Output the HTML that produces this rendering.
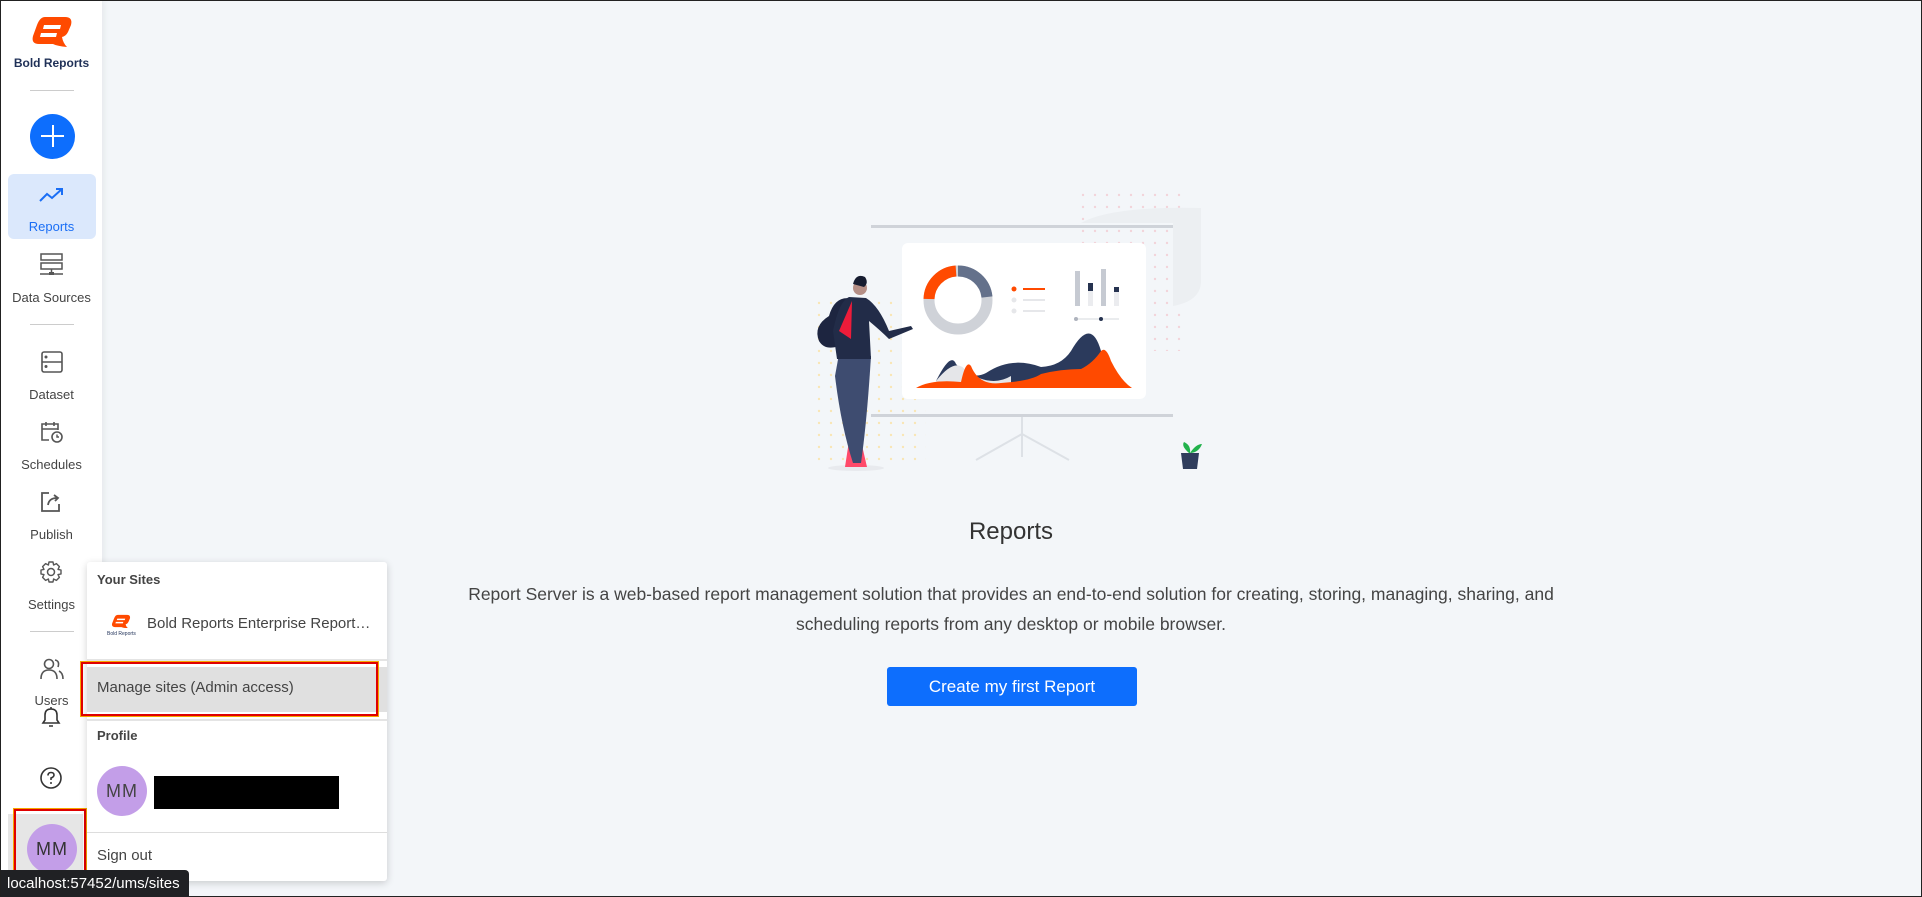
<!DOCTYPE html>
<html><head><meta charset="utf-8"><style>
*{box-sizing:border-box;margin:0;padding:0}
html,body{width:1922px;height:897px;overflow:hidden}
body{font-family:"Liberation Sans",Arial,sans-serif;background:#f3f6f9;position:relative;border:1px solid #222}
.sb{position:absolute;left:0;top:0;width:101px;height:897px;background:#fff;box-shadow:2px 0 6px rgba(0,0,0,.06)}
.lbl{position:absolute;left:0;width:101px;text-align:center;font-size:13px;color:#444}
.ic{position:absolute;left:38px}
.div{position:absolute;left:29px;width:44px;height:1px;background:#ccc}
.dd{position:absolute;left:86px;top:561px;width:300px;height:319px;background:#fff;box-shadow:0 2px 8px rgba(0,0,0,.18);border-radius:3px}
.sep{position:absolute;left:0;width:300px;height:2px;background:#e4e4e4}
</style></head><body>
<div class="sb">
<svg style="position:absolute;left:30px;top:14px" width="42" height="34" viewBox="0 0 42 34"><path d="M14 2 H34 Q42 2 40 10 L37 17 Q35 21 31 22 Q32 28 36 32 Q26 31 22 29 H8 Q0 29 2 21 L6 10 Q9 2 14 2 Z" fill="#ff4a00"/><path d="M13 10 H30 L29 14 H12 Z M10 18 H26 L25 22 H9 Z" fill="#fff"/></svg>
<div class="lbl" style="top:55px;font-size:12px;font-weight:bold;color:#1f3057">Bold Reports</div>
<div class="div" style="top:89px"></div>
<div style="position:absolute;left:29px;top:113px;width:45px;height:45px;border-radius:50%;background:#0d6efd"></div>
<div style="position:absolute;left:40px;top:134px;width:23px;height:2px;background:#fff"></div>
<div style="position:absolute;left:50.5px;top:124px;width:2px;height:22px;background:#fff"></div>
<div style="position:absolute;left:7px;top:173px;width:88px;height:65px;background:#dbe8fc;border-radius:6px"></div>
<svg class="ic" style="top:186px" width="26" height="16" viewBox="0 0 26 16"><path d="M1 14 L8 7 L13 11 L23 2 M17 2 H23 V8" stroke="#1a6ef5" stroke-width="2" fill="none"/></svg>
<div class="lbl" style="top:218px;color:#1a6ef5">Reports</div>
<svg class="ic" style="top:252px" width="26" height="24" viewBox="0 0 26 24"><rect x="2" y="1" width="21" height="6" fill="none" stroke="#555" stroke-width="1.5"/><rect x="2" y="10" width="21" height="6" fill="none" stroke="#555" stroke-width="1.5"/><path d="M12.5 16 V20 M1 21 H24" stroke="#555" stroke-width="1.5"/><rect x="10" y="19" width="5" height="3" fill="#555"/></svg>
<div class="lbl" style="top:289px">Data Sources</div>
<div class="div" style="top:323px"></div>
<svg class="ic" style="top:349px" width="24" height="24" viewBox="0 0 24 24"><rect x="3" y="2" width="20" height="20" rx="2" fill="none" stroke="#555" stroke-width="1.6"/><path d="M3 12 H23" stroke="#555" stroke-width="1.6"/><circle cx="7" cy="7" r="1.5" fill="#555"/><circle cx="7" cy="16.5" r="1.5" fill="#555"/></svg>
<div class="lbl" style="top:386px">Dataset</div>
<svg class="ic" style="top:419px" width="26" height="24" viewBox="0 0 26 24"><path d="M10 20 H3 V4 H19 V10 M3 9 H19 M7 2 V6 M15 2 V6" stroke="#555" stroke-width="1.6" fill="none"/><circle cx="18" cy="17" r="5" fill="none" stroke="#555" stroke-width="1.6"/><path d="M18 14.5 V17 H20" stroke="#555" stroke-width="1.4" fill="none"/></svg>
<div class="lbl" style="top:456px">Schedules</div>
<svg class="ic" style="top:489px" width="24" height="24" viewBox="0 0 24 24"><path d="M10 3 H3 V21 H20 V14" stroke="#555" stroke-width="1.8" fill="none"/><path d="M9 15 Q10 8 18 8 M15 5 L19 8 L16 11" stroke="#555" stroke-width="1.8" fill="none"/></svg>
<div class="lbl" style="top:526px">Publish</div>
<svg class="ic" style="top:559px" width="24" height="24" viewBox="0 0 24 24"><circle cx="12" cy="12" r="3.5" fill="none" stroke="#555" stroke-width="1.5"/><path d="M10 2 H14 L14.6 5 L17.4 3.6 L20.4 6.6 L19 9.4 L22 10 V14 L19 14.6 L20.4 17.4 L17.4 20.4 L14.6 19 L14 22 H10 L9.4 19 L6.6 20.4 L3.6 17.4 L5 14.6 L2 14 V10 L5 9.4 L3.6 6.6 L6.6 3.6 L9.4 5 Z" fill="none" stroke="#555" stroke-width="1.4" stroke-linejoin="round"/></svg>
<div class="lbl" style="top:596px">Settings</div>
<div class="div" style="top:630px"></div>
<svg class="ic" style="top:656px" width="26" height="24" viewBox="0 0 26 24"><circle cx="10" cy="7" r="4.5" fill="none" stroke="#555" stroke-width="1.6"/><path d="M2 22 Q2 13 10 13 Q18 13 18 22" fill="none" stroke="#555" stroke-width="1.6"/><path d="M16 3 Q21 4 19 10 M20 14 Q24 16 24 22" fill="none" stroke="#555" stroke-width="1.6"/></svg>
<div class="lbl" style="top:692px">Users</div>
<svg class="ic" style="top:704px" width="24" height="24" viewBox="0 0 24 24"><path d="M4 18 H20 L18 15 V10 Q18 4 12 4 Q6 4 6 10 V15 Z M12 2 V4 M10 21 H14" fill="none" stroke="#333" stroke-width="1.6"/></svg>
<svg class="ic" style="top:765px" width="24" height="24" viewBox="0 0 24 24"><circle cx="12" cy="12" r="10" fill="none" stroke="#333" stroke-width="1.6"/><path d="M9 9.5 Q9 6.5 12 6.5 Q15 6.5 15 9 Q15 11 12 12 V14" fill="none" stroke="#333" stroke-width="1.6"/><circle cx="12" cy="17" r="1" fill="#333"/></svg>
<div style="position:absolute;left:7px;top:813px;width:75px;height:70px;background:#e6e6e6"></div>
<div style="position:absolute;left:26px;top:823px;width:50px;height:50px;border-radius:50%;background:#c39ee8;color:#333;font-size:18px;text-align:center;line-height:50px;letter-spacing:1px">MM</div>
<div style="position:absolute;left:13px;top:808px;width:72px;height:74px;border:2px solid #e00000;outline:1px solid #f5a500"></div>
</div>
<div class="dd">
<div style="position:absolute;left:10px;top:10px;font-size:13px;font-weight:bold;color:#444">Your Sites</div>
<svg style="position:absolute;left:24px;top:52px" width="20" height="14" viewBox="0 0 42 30"><path d="M14 2 H34 Q42 2 40 10 L37 17 Q35 21 31 22 Q32 28 36 30 Q26 30 22 28 H8 Q0 28 2 20 L6 10 Q9 2 14 2 Z" fill="#ff4a00"/><path d="M13 10 H30 L29 13 H12 Z M10 17 H26 L25 20 H9 Z" fill="#fff"/></svg>
<div style="position:absolute;left:20px;top:69px;font-size:5px;color:#1f3057">Bold Reports</div>
<div style="position:absolute;left:60px;top:53px;font-size:15px;color:#444">Bold Reports Enterprise Report…</div>
<div class="sep" style="top:97px"></div>
<div style="position:absolute;left:0;top:105px;width:300px;height:45px;background:#e0e0e0"></div>
<div style="position:absolute;left:-6px;top:100px;width:297px;height:54px;border:2px solid #e00000;outline:1px solid #f5a500"></div>
<div style="position:absolute;left:10px;top:117px;font-size:15px;color:#444">Manage sites (Admin access)</div>
<div class="sep" style="top:157px"></div>
<div style="position:absolute;left:10px;top:166px;font-size:13px;font-weight:bold;color:#444">Profile</div>
<div style="position:absolute;left:10px;top:204px;width:50px;height:50px;border-radius:50%;background:#c39ee8;color:#444;font-size:18px;text-align:center;line-height:50px;letter-spacing:1px">MM</div>
<div style="position:absolute;left:67px;top:214px;width:185px;height:33px;background:#000"></div>
<div style="position:absolute;left:0;top:270px;width:300px;height:1px;background:#ddd"></div>
<div style="position:absolute;left:10px;top:285px;font-size:15px;color:#444">Sign out</div>
</div>
<div style="position:absolute;left:0;top:869px;width:188px;height:28px;background:#202124;border-radius:0 4px 0 0;color:#fff;font-size:15px;line-height:28px;padding-left:6px">localhost:57452/ums/sites</div>
<svg style="position:absolute;left:0;top:0" width="1922" height="897" viewBox="0 0 1922 897">
<defs><pattern id="gd" width="12" height="12" patternUnits="userSpaceOnUse"><circle cx="2" cy="2" r="1.2" fill="#f2d4da"/></pattern><pattern id="yd" width="12" height="12" patternUnits="userSpaceOnUse"><circle cx="2" cy="2" r="1.2" fill="#f8e6b5"/></pattern></defs>
<rect x="1073" y="190" width="112" height="160" fill="url(#gd)"/>
<path d="M1080 222 Q1110 205 1200 207 V280 Q1200 300 1172 305 V222 Z" fill="#eceff2"/>
<rect x="815" y="298" width="110" height="163" fill="url(#yd)"/>
<rect x="870" y="224" width="302" height="3" fill="#cfd3d9"/>
<rect x="870" y="413" width="302" height="3" fill="#cfd3d9"/>
<path d="M1021 416 V456 M1021 433 L975 459 M1021 433 L1068 459" stroke="#dde1e6" stroke-width="2" fill="none"/>
<rect x="901" y="242" width="244" height="156" rx="6" fill="#fff"/>
<circle cx="957" cy="299" r="29" fill="none" stroke="#cfd2d8" stroke-width="11"/>
<path d="M957 270 A29 29 0 0 1 986 296" fill="none" stroke="#64718b" stroke-width="11"/>
<path d="M928 298 A29 29 0 0 1 955 270" fill="none" stroke="#ff4a00" stroke-width="11"/>
<circle cx="1013" cy="288" r="2.5" fill="#ff4a00"/><rect x="1022" y="287" width="22" height="2" fill="#ff4a00"/>
<circle cx="1013" cy="299" r="2.5" fill="#e6e7ea"/><rect x="1022" y="298" width="22" height="2" fill="#e6e7ea"/>
<circle cx="1013" cy="310" r="2.5" fill="#e6e7ea"/><rect x="1022" y="309" width="22" height="2" fill="#e6e7ea"/>
<rect x="1074" y="270" width="5" height="35" fill="#c6cad2"/><rect x="1087" y="282" width="5" height="23" fill="#ebecef"/><rect x="1087" y="282" width="5" height="8" fill="#263350"/><rect x="1100" y="268" width="5" height="37" fill="#c6cad2"/><rect x="1113" y="286" width="5" height="19" fill="#ebecef"/><rect x="1113" y="286" width="5" height="5" fill="#263350"/>
<path d="M1074 318 H1118" stroke="#e3e5e9" stroke-width="1.5"/><circle cx="1075" cy="318" r="2" fill="#aeb3bd"/><circle cx="1100" cy="318" r="2" fill="#263350"/>
<path d="M935 380 Q950 350 955 363 Q970 380 985 372 Q1010 355 1040 366 Q1060 365 1070 350 Q1090 315 1100 350 L1100 387 H935 Z" fill="#2b3a5c"/>
<path d="M935 380 Q955 355 965 370 Q990 387 1010 375 L1010 387 H935 Z" fill="#e5e6e9"/>
<path d="M915 387 Q930 378 960 381 Q965 358 970 365 Q978 385 1000 382 Q1030 380 1040 373 Q1060 368 1080 368 Q1092 362 1100 350 Q1105 345 1110 360 Q1120 380 1131 387 Z" fill="#ff4a00"/>
<ellipse cx="855" cy="467" rx="28" ry="3" fill="#e8eaee"/>
<path d="M848 440 L844 466 H866 L860 440 Z" fill="#ff4a6a"/>
<path d="M838 353 L834 375 Q840 425 852 462 H860 Q866 420 870 355 Z" fill="#3e4c70"/>
<path d="M858 300 Q835 290 828 315 Q812 325 818 340 Q824 350 838 345 Z" fill="#1d2540"/>
<path d="M848 296 Q838 300 832 330 L836 358 H870 L868 320 Q880 330 888 338 L912 328 L910 325 L888 330 Q878 305 865 297 Z" fill="#222c48"/>
<path d="M851 300 L850 338 L838 330 Z" fill="#ee1c3a"/>
<circle cx="859" cy="287" r="7" fill="#b58f86"/>
<path d="M852 283 Q855 272 864 276 Q868 282 863 286 Z" fill="#161c30"/>
<path d="M1180 452 H1198 L1196 468 H1182 Z" fill="#2f3d5c"/><path d="M1188 452 Q1180 445 1183 441 Q1190 444 1189 452 Q1195 443 1201 443 Q1198 451 1190 452" fill="#22b24c"/>
</svg>
<div style="position:absolute;left:700px;top:517px;width:620px;text-align:center;font-size:24px;color:#333">Reports</div>
<div style="position:absolute;left:420px;top:578px;width:1180px;text-align:center;font-size:17.5px;line-height:30px;color:#444">Report Server is a web-based report management solution that provides an end-to-end solution for creating, storing, managing, sharing, and<br>scheduling reports from any desktop or mobile browser.</div>
<div style="position:absolute;left:886px;top:666px;width:250px;height:39px;background:#0d6efd;border-radius:3px;color:#fff;font-size:17px;text-align:center;line-height:39px">Create my first Report</div>
</body></html>
